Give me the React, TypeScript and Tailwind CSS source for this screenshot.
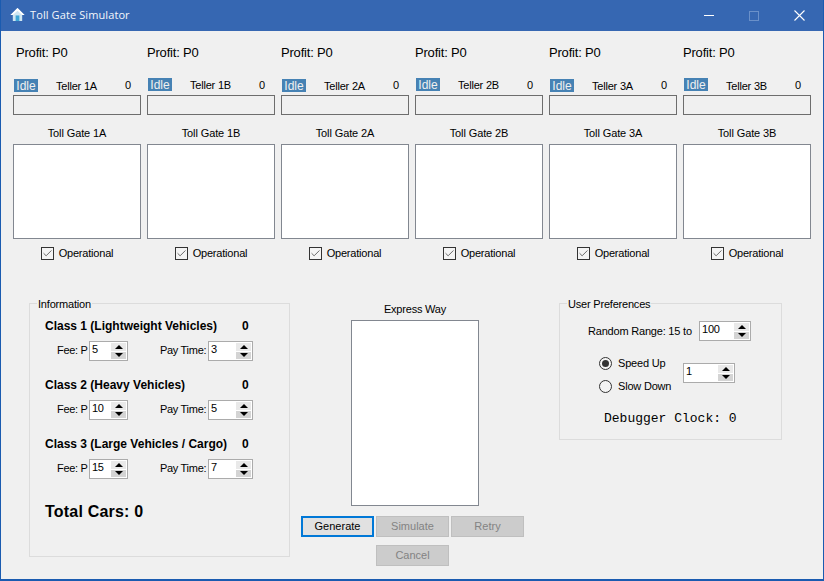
import { Check } from 'lucide-react'

const gates = ['1A', '1B', '2A', '2B', '3A', '3B']

const Spinner = ({ value, width }: { value: string; width: string }) => (
  <div className={`flex h-5 shrink-0 items-stretch border border-[#ababab] bg-white ${width}`}>
    <span className="flex-1 pl-[2px] text-[11px] leading-[15px] text-black">{value}</span>
    <div className="my-[1px] mr-[1px] flex w-[15px] flex-col gap-[1px]">
      <div className="flex flex-1 items-center justify-center bg-[#e9e9e9]">
        <div className="h-0 w-0 border-x-[4px] border-b-[4px] border-x-transparent border-b-black" />
      </div>
      <div className="flex flex-1 items-center justify-center bg-[#d4d4d4]">
        <div className="h-0 w-0 border-x-[4px] border-t-[4px] border-x-transparent border-t-black" />
      </div>
    </div>
  </div>
)

const Gate = ({ name, index }: { name: string; index: number }) => (
  <div className="flex w-[128px] flex-col text-[11px] tracking-[-0.2px]">
    <div className={`h-[17px] text-[13px] leading-[17px] ${index === 0 ? 'pl-[3px]' : ''}`}>Profit: P0</div>
    <div className="mt-[16px] flex h-[18px] items-start">
      <span className={`ml-[1px] flex h-[13px] w-[24px] items-center justify-center bg-[#4682b4] text-[12px] tracking-normal text-[#f0f0f0] ${index % 2 === 1 ? 'mt-[1px]' : 'mt-[2px]'}`}>
        Idle
      </span>
      <span className={`ml-[18px] w-[69px] leading-[14px] ${index === 1 || index === 3 ? 'mt-[1px]' : 'mt-[2px]'}`}>
        Teller {name}
      </span>
      <span className="mt-[1px] leading-[14px]">0</span>
    </div>
    <div className="h-[20px] border border-[#6d6d6d]" />
    <div className="mt-[11px] h-[14px] text-center leading-[14px] tracking-[-0.1px]">Toll Gate {name}</div>
    <div className="mt-[4px] h-[95px] border border-[#828790] bg-white" />
    <div className="mt-[7px] flex h-[14px] items-center justify-center gap-[5px]">
      <span className="flex h-[13px] w-[13px] items-center justify-center border border-[#333] bg-[#f4f4f4]">
        <Check size={13} strokeWidth={1.7} className="text-[#444]" />
      </span>
      Operational
    </div>
  </div>
)

const ClassBlock = ({ title, fee, time, mt }: { title: string; fee: string; time: string; mt: string }) => (
  <div className={mt}>
    <div className="flex h-[14px] items-center pl-[15px] text-[12px] font-bold leading-[14px]">
      <span className="w-[197px] whitespace-nowrap">{title}</span>
      <span>0</span>
    </div>
    <div className="mt-[8px] flex h-5 items-center text-[11px] tracking-[-0.3px]">
      <span className="mb-[2px] ml-[27px] w-[32px] whitespace-nowrap">Fee: P</span>
      <Spinner value={fee} width="w-[39px]" />
      <span className="mb-[2px] ml-[32px] w-[48px] whitespace-nowrap">Pay Time:</span>
      <Spinner value={time} width="w-[45px]" />
    </div>
  </div>
)

const Group = ({ title, className, children }: { title: string; className: string; children: React.ReactNode }) => (
  <fieldset className={`border border-[#dcdcdc] ${className}`}>
    <legend className="ml-[7px] h-[14px] px-[1px] text-[11px] leading-[16px] tracking-[-0.2px]">{title}</legend>
    {children}
  </fieldset>
)

const Disabled = ({ label }: { label: string }) => (
  <div className="flex h-[21px] w-[73px] items-center justify-center border border-[#bfbfbf] bg-[#cccccc] text-[11px] text-[#838383]">
    {label}
  </div>
)

const Radio = ({ label, on }: { label: string; on: boolean }) => (
  <div className="flex h-[23px] items-center gap-[6px] text-[11px] tracking-[-0.2px]">
    <span className="flex h-[13px] w-[13px] items-center justify-center rounded-full border border-[#333] bg-[#f4f4f4]">
      {on && <span className="h-[7px] w-[7px] rounded-full bg-[#333]" />}
    </span>
    {label}
  </div>
)

export default function App() {
  return (
    <div className="flex h-[581px] w-[824px] flex-col overflow-hidden border-x border-b-2 border-[#1a5bb0] bg-[#f0f0f0] font-['Liberation_Sans',sans-serif] text-black">
      <div className="flex h-[31px] shrink-0 items-center bg-[#3667b2] pl-[9px] text-[#f4f7fb]">
        <svg width="15" height="15" viewBox="0 0 16 16" className="mb-[2px]">
          <path d="M8 1 .5 8.5H3V15h10V8.5h2.5z" fill="#cfe6f2" />
          <path d="M8 1 .5 8.5H3L8 4l5 4.5h2.5z" fill="#ffffff" />
          <rect x="6" y="9" width="4" height="6" fill="#3fa7d6" />
        </svg>
        <span className="ml-[5px] font-['Open_Sans',sans-serif] text-[11px] tracking-[0.1px]">Toll Gate Simulator</span>
        <div className="ml-auto flex items-center">
          <div className="h-[1px] w-[10px] bg-white" />
          <div className="ml-[35px] h-[10px] w-[10px] border border-[#6a90c9]" />
          <svg width="11" height="11" viewBox="0 0 11 11" className="ml-[35px] mr-[18px]">
            <path d="M.5.5l10 10M10.5.5l-10 10" stroke="#fff" strokeWidth="1.1" fill="none" />
          </svg>
        </div>
      </div>

      <div className="ml-[12px] mt-[13px] flex gap-[6px]">
        {gates.map((g, i) => (
          <Gate key={g} name={g} index={i} />
        ))}
      </div>

      <div className="ml-[28px] mt-[42px] flex items-start">
        <Group title="Information" className="-mt-[6px] h-[261px] w-[261px]">
          <ClassBlock title="Class 1 (Lightweight Vehicles)" fee="5" time="3" mt="mt-[9px]" />
          <ClassBlock title="Class 2 (Heavy Vehicles)" fee="10" time="5" mt="mt-[17px]" />
          <ClassBlock title="Class 3 (Large Vehicles / Cargo)" fee="15" time="7" mt="mt-[17px]" />
          <div className="mt-[24px] pl-[15px] text-[16px] font-bold leading-[18px] tracking-[0.2px]">Total Cars: 0</div>
        </Group>

        <div className="ml-[11px] flex w-[223px] flex-col">
          <div className="ml-[50px] w-[128px] text-center text-[11px] leading-[14px] tracking-[-0.2px]">Express Way</div>
          <div className="ml-[50px] mt-[4px] h-[186px] w-[128px] border border-[#828790] bg-white" />
          <div className="mt-[10px] flex gap-[2px]">
            <div className="flex h-[21px] w-[73px] items-center justify-center border-2 border-[#0078d7] bg-[#e1e1e1] text-[11px]">
              Generate
            </div>
            <Disabled label="Simulate" />
            <Disabled label="Retry" />
          </div>
          <div className="ml-[75px] mt-[8px]">
            <Disabled label="Cancel" />
          </div>
        </div>

        <Group title="User Preferences" className="-mt-[6px] ml-[35px] h-[144px] w-[223px]">
          <div className="ml-[28px] mt-[11px] flex h-5 items-center text-[11px] tracking-[-0.2px]">
            <span className="w-[111px] whitespace-nowrap">Random Range: 15 to</span>
            <Spinner value="100" width="w-[52px]" />
          </div>
          <div className="mt-[11px] flex items-center">
            <div className="ml-[39px] flex w-[84px] flex-col">
              <Radio label="Speed Up" on />
              <Radio label="Slow Down" on={false} />
            </div>
            <div className="mb-[4px]">
              <Spinner value="1" width="w-[52px]" />
            </div>
          </div>
          <div className="mt-[14px] pl-[44px] font-['Liberation_Mono',monospace] text-[13px] leading-[14px]">
            Debugger Clock: 0
          </div>
        </Group>
      </div>
    </div>
  )
}
